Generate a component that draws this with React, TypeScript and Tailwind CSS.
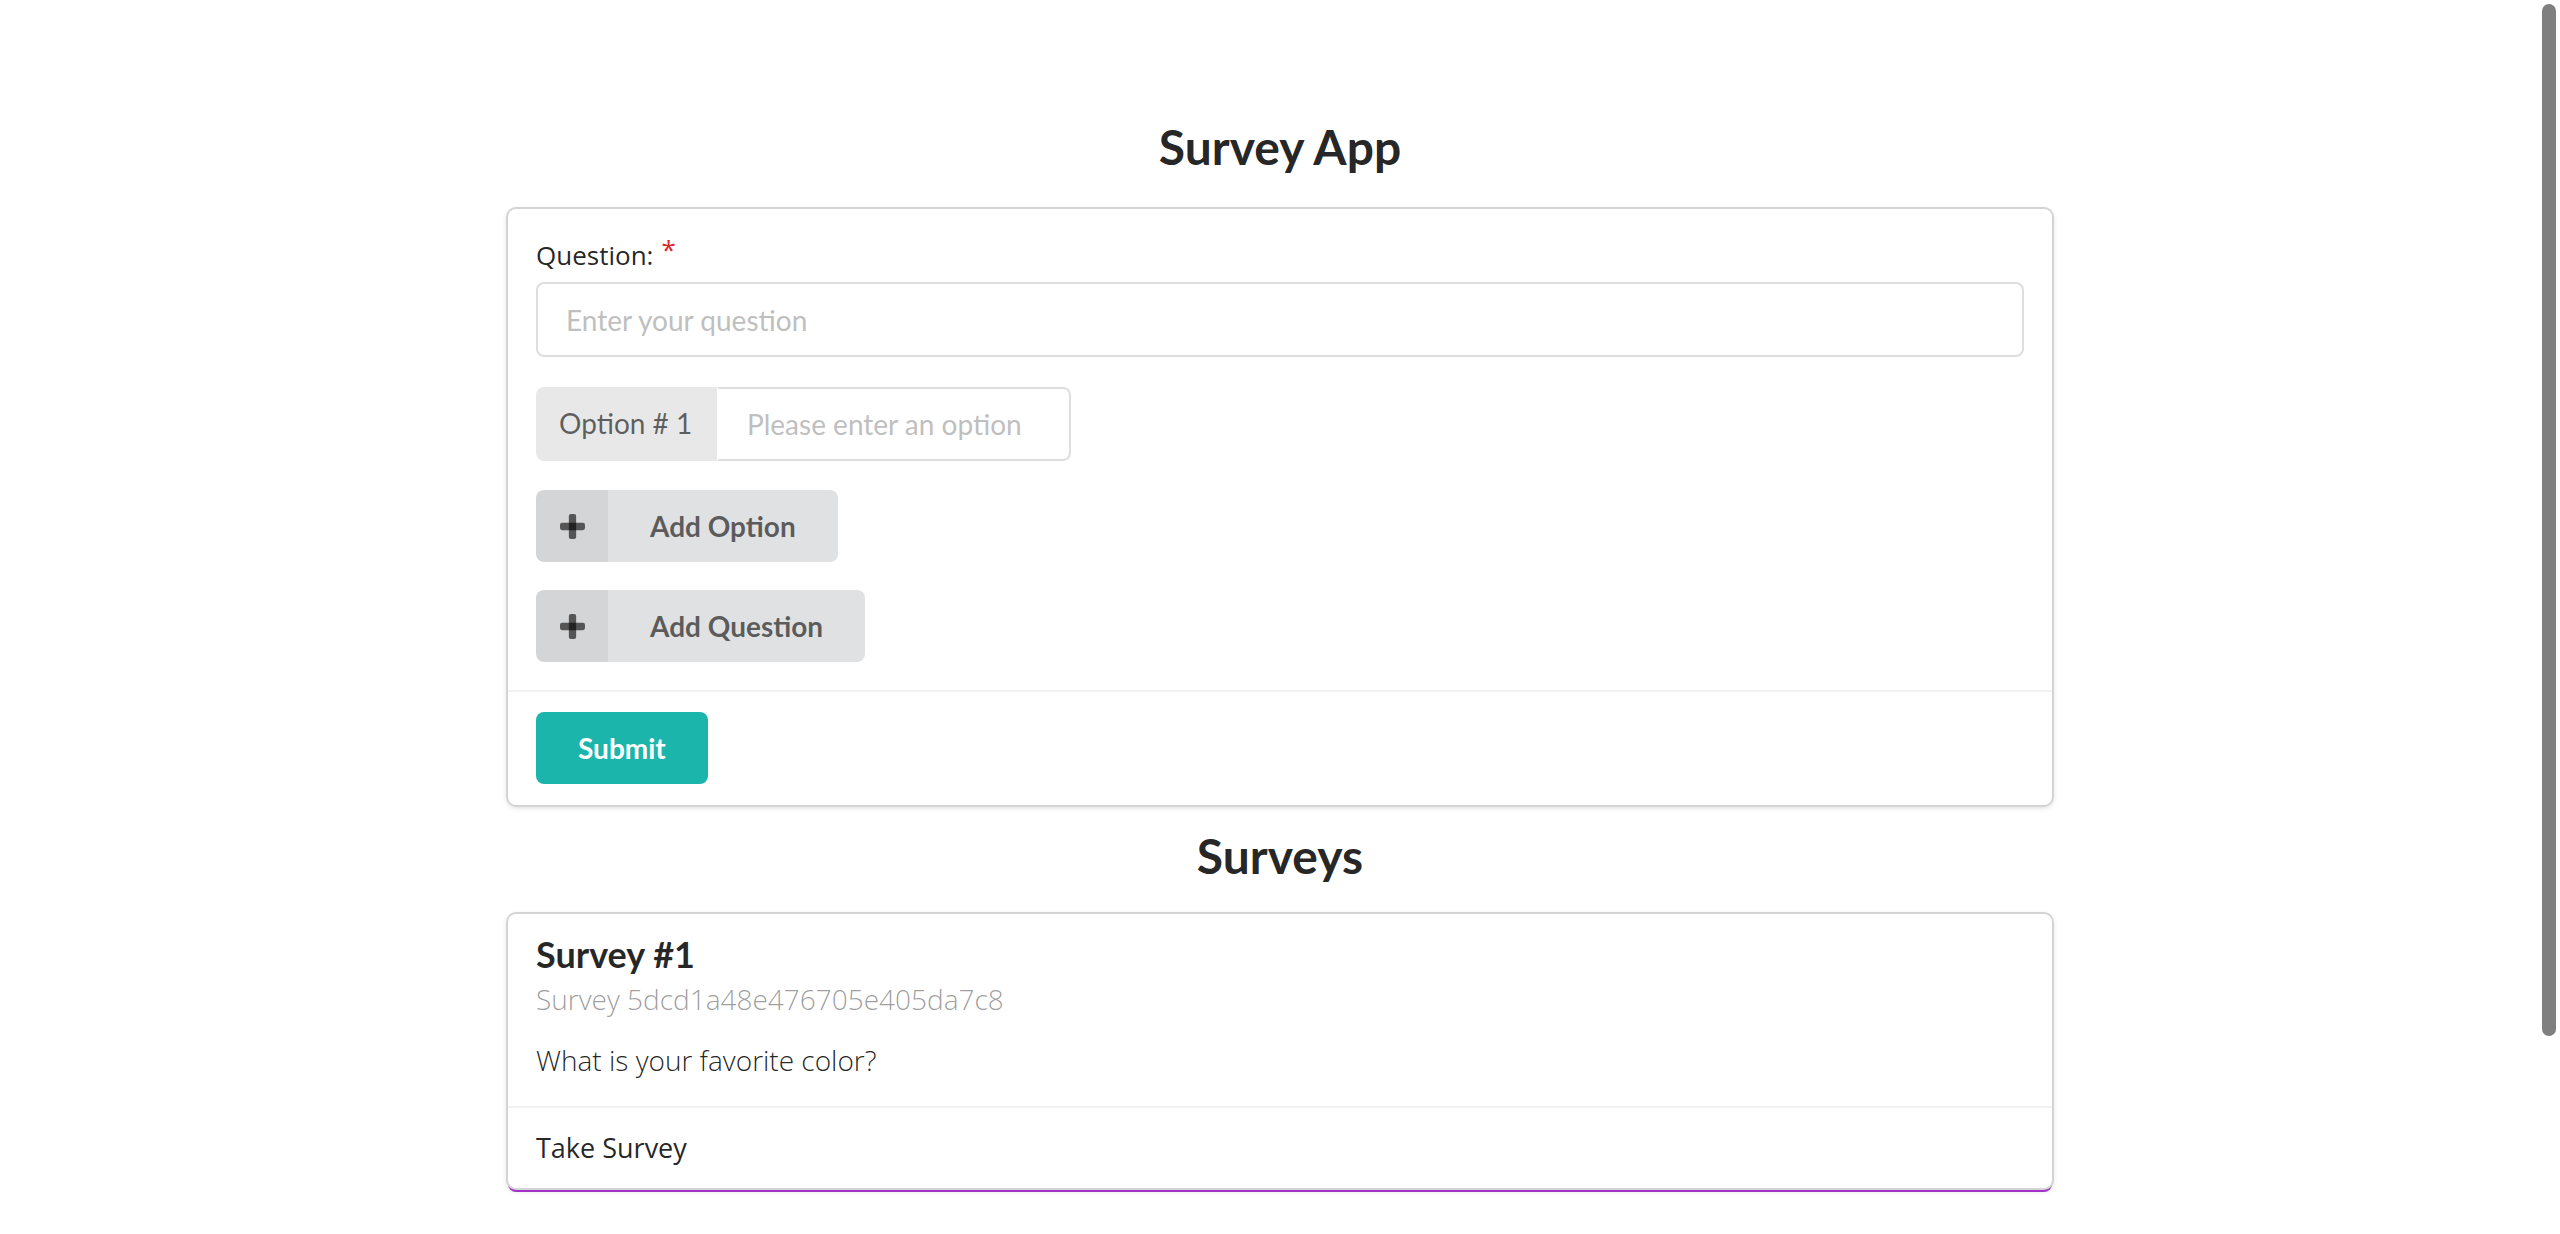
function PlusIcon() {
  return (
    <svg width="25" height="25" viewBox="0 0 24 24" fill="currentColor">
      <rect x="8.5" y="0" width="7" height="24" rx="2" />
      <rect x="0" y="8.5" width="24" height="7" rx="2" />
    </svg>
  );
}

function IconButton({ label }: { label: string }) {
  return (
    <button
      type="button"
      className="flex h-[72px] items-stretch rounded-[8px] bg-[#e0e1e2] text-[28px] font-bold text-[rgba(0,0,0,0.6)] font-[family-name:Lato,sans-serif]"
    >
      <span className="flex w-[72px] items-center justify-center rounded-l-[8px] bg-[rgba(0,0,0,0.05)]">
        <PlusIcon />
      </span>
      <span className="flex items-center pl-[42px] pr-[42px] leading-none">{label}</span>
    </button>
  );
}

function SurveyForm() {
  return (
    <div className="rounded-[8px] bg-white shadow-[0_0_0_2px_#d4d4d5,0_2px_6px_0_#d4d4d5]">
      <div className="px-[28px] pt-[28px] pb-[28px]">
        <label className="block mb-[8px] text-[26px] leading-[37px] text-[rgba(0,0,0,0.87)]">
          Question:
          <span className="relative -top-[6px] ml-[8px] text-[#db2828]">*</span>
        </label>
        <input
          placeholder="Enter your question"
          className="block h-[75px] w-full rounded-[8px] border-2 border-[rgba(34,36,38,0.15)] px-[28px] text-[28px] text-[rgba(0,0,0,0.87)] outline-none placeholder:text-[#bfbfbf] font-[family-name:Lato,sans-serif]"
        />

        <div className="mt-[30px] flex h-[74px] font-[family-name:Lato,sans-serif] text-[28px]">
          <div className="flex w-[181px] items-center rounded-l-[8px] bg-[#e8e8e8] pl-[23px] pb-[3px] text-[rgba(0,0,0,0.6)]">
            Option # 1
          </div>
          <input
            placeholder="Please enter an option"
            className="w-[354px] rounded-r-[8px] border-2 border-l-transparent border-[rgba(34,36,38,0.15)] px-[28px] text-[rgba(0,0,0,0.87)] outline-none placeholder:text-[#bfbfbf]"
          />
        </div>

        <div className="mt-[29px] flex flex-col items-start gap-[28px]">
          <IconButton label="Add Option" />
          <IconButton label="Add Question" />
        </div>
      </div>
      <div className="border-t-2 border-[rgba(34,36,38,0.06)] px-[28px] pt-[20px] pb-[21px]">
        <button
          type="button"
          className="h-[72px] rounded-[8px] bg-[#1bb5ac] px-[42px] text-[28px] font-bold text-white font-[family-name:Lato,sans-serif]"
        >
          Submit
        </button>
      </div>
    </div>
  );
}

function SurveyCard() {
  return (
    <div className="rounded-[8px] bg-white shadow-[0_0_0_2px_#d4d4d5,0_4px_0_0_#a333c8,0_2px_6px_0_#d4d4d5]">
      <div className="px-[28px] pt-[28px] pb-[26px]">
        <div className="-mt-[11px] text-[36px] leading-[46px] font-bold text-[rgba(0,0,0,0.85)] font-[family-name:Lato,sans-serif]">
          Survey #1
        </div>
        <div className="mt-[2px] text-[28px] leading-[40px] font-light text-[rgba(0,0,0,0.4)]">
          Survey 5dcd1a48e476705e405da7c8
        </div>
        <div className="mt-[21px] text-[28px] leading-[40px] font-light text-[rgba(0,0,0,0.87)]">
          What is your favorite color?
        </div>
      </div>
      <div className="border-t-2 border-[rgba(34,36,38,0.06)] px-[28px] pt-[20px] pb-[20px] text-[27px] leading-[40px] text-[rgba(0,0,0,0.87)]">
        Take Survey
      </div>
    </div>
  );
}

export default function App() {
  return (
    <div className="relative h-screen overflow-hidden bg-white font-[family-name:'Open_Sans',sans-serif]">
      <div className="mx-auto w-[1544px] pt-[116px]">
        <h2 className="mb-[31px] text-center text-[48px] leading-[62px] font-bold text-[rgba(0,0,0,0.87)] font-[family-name:Lato,sans-serif]">
          Survey App
        </h2>
        <SurveyForm />
        <h2 className="mt-[20px] mb-[27px] text-center text-[48px] leading-[62px] font-bold text-[rgba(0,0,0,0.87)] font-[family-name:Lato,sans-serif]">
          Surveys
        </h2>
        <SurveyCard />
      </div>
      <div className="absolute right-[4px] top-[4px] h-[1032px] w-[14px] rounded-full bg-[#7f7f7f]" />
    </div>
  );
}
